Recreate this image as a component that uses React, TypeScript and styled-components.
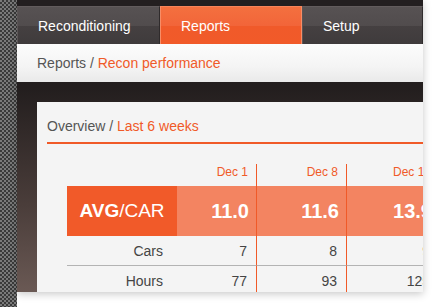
import React from 'react';
import styled, { createGlobalStyle } from 'styled-components';

const GlobalStyle = createGlobalStyle`
  html, body {
    margin: 0;
    padding: 0;
    background: #ffffff;
  }
  body {
    font-family: "Liberation Sans", Arial, sans-serif;
  }
`;

const ORANGE = '#f05a28';

const tabs = [
  { label: 'Reconditioning', width: 143 },
  { label: 'Reports', width: 142, active: true },
  { label: 'Setup', width: 121 },
];

const weeks = [
  { date: 'Dec 1', avg: '11.0', cars: '7', hours: '77', width: 80 },
  { date: 'Dec 8', avg: '11.6', cars: '8', hours: '93', width: 90 },
  { date: 'Dec 15', avg: '13.9', cars: '9', hours: '125', width: 93 },
];

const App = () => {
  const columns = `110px ${weeks.map((w) => `${w.width}px`).join(' ')}`;

  return (
    <>
      <GlobalStyle />
      <Page>
        <Checker />
        <Screen>
          <TopStrip />
          <TabBar>
            {tabs.map((t) => (
              <Tab key={t.label} $active={t.active} style={{ width: t.width }}>
                {t.label}
              </Tab>
            ))}
          </TabBar>
          <Breadcrumb>
            Reports / <Accent>Recon performance</Accent>
          </Breadcrumb>
          <Body>
            <Panel>
              <PanelTitle>
                Overview / <Accent>Last 6 weeks</Accent>
              </PanelTitle>
              <Table style={{ gridTemplateColumns: columns }}>
                <HeadCell />
                {weeks.map((w) => (
                  <DateCell key={w.date}>{w.date}</DateCell>
                ))}

                <AvgLabel>
                  <b>AVG</b>/CAR
                </AvgLabel>
                {weeks.map((w) => (
                  <AvgValue key={w.date}>{w.avg}</AvgValue>
                ))}

                <RowLabel $divider>Cars</RowLabel>
                {weeks.map((w) => (
                  <Value key={w.date} $divider>
                    {w.cars}
                  </Value>
                ))}

                <RowLabel>Hours</RowLabel>
                {weeks.map((w) => (
                  <Value key={w.date}>{w.hours}</Value>
                ))}
              </Table>
            </Panel>
          </Body>
        </Screen>
      </Page>
    </>
  );
};

export default App;

const Page = styled.div`
  display: flex;
  width: 434px;
  height: 307px;
  overflow: hidden;
  background: #ffffff;
`;

const Checker = styled.div`
  width: 17px;
  flex-shrink: 0;
  background-color: #7a7a7a;
  background-image: repeating-conic-gradient(#3a3a3a 0% 25%, #7a7a7a 0% 50%);
  background-size: 4px 4px;
`;

const Screen = styled.div`
  display: flex;
  flex-direction: column;
  width: 406px;
  height: 292px;
  flex-shrink: 0;
  overflow: hidden;
  background: linear-gradient(180deg, #1f1b1c 0%, #231e1e 30%, #4a3d3a 70%, #6a5954 100%);
  box-shadow: 0 2px 8px rgba(0, 0, 0, 0.22);
`;

const TopStrip = styled.div`
  height: 6px;
  flex-shrink: 0;
  background: #231f20;
`;

const TabBar = styled.div`
  display: flex;
  height: 38px;
  flex-shrink: 0;
`;

const Tab = styled.div<{ $active?: boolean }>`
  box-sizing: border-box;
  flex-shrink: 0;
  height: 38px;
  padding: 0 0 0 20px;
  display: flex;
  align-items: center;
  font-size: 14px;
  color: #ffffff;
  border-top: 1px solid ${({ $active }) => ($active ? '#f7845a' : '#625c5d')};
  border-left: 1px solid ${({ $active }) => ($active ? '#f88d66' : '#5c5657')};
  border-right: 1px solid ${({ $active }) => ($active ? '#f88d66' : '#2f2b2c')};
  background: ${({ $active }) =>
    $active
      ? 'linear-gradient(180deg, #f4703f 0%, #f26539 50%, #f05a2a 51%, #f15a29 100%)'
      : 'linear-gradient(180deg, #575253 0%, #514c4d 50%, #454041 51%, #3f3b3c 100%)'};
`;

const Breadcrumb = styled.div`
  height: 38px;
  flex-shrink: 0;
  padding-left: 20px;
  display: flex;
  align-items: center;
  font-size: 14px;
  color: #555555;
  white-space: pre;
  background: linear-gradient(180deg, #fcfcfc 0%, #f4f4f4 60%, #e9e9e9 100%);
`;

const Accent = styled.span`
  color: ${ORANGE};
`;

const Body = styled.div`
  flex: 1;
  min-height: 0;
  overflow: hidden;
  padding: 20px 0 0 20px;
  display: flex;
`;

const Panel = styled.div`
  flex: 1;
  background: #f4f4f4;
  padding-left: 10px;
`;

const PanelTitle = styled.div`
  box-sizing: border-box;
  height: 42px;
  padding-top: 16px;
  font-size: 14px;
  color: #555555;
  white-space: pre;
  border-bottom: 2px solid ${ORANGE};
`;

const Table = styled.div`
  display: grid;
  margin: 20px 0 0 20px;
  grid-template-rows: 22px 50px 30px 30px;
`;

const HeadCell = styled.div``;

const DataCell = styled.div`
  box-sizing: border-box;
  display: flex;
  align-items: center;
  justify-content: flex-end;
  padding-right: 8px;
  border-right: 1px solid ${ORANGE};
  white-space: nowrap;
`;

const DateCell = styled(DataCell)`
  font-size: 12px;
  color: ${ORANGE};
  padding-bottom: 6px;
`;

const AvgLabel = styled.div`
  display: flex;
  align-items: center;
  justify-content: center;
  background: #f15a29;
  color: #ffffff;
  font-size: 19px;
`;

const AvgValue = styled(DataCell)`
  background: #f38461;
  color: #ffffff;
  font-size: 20px;
  font-weight: bold;
  padding-right: 7px;
`;

const RowLabel = styled.div<{ $divider?: boolean }>`
  display: flex;
  align-items: center;
  justify-content: flex-end;
  padding-right: 14px;
  font-size: 14px;
  color: #444444;
  border-bottom: ${({ $divider }) => ($divider ? '1px solid #b3b3b3' : 'none')};
`;

const Value = styled(DataCell)<{ $divider?: boolean }>`
  font-size: 14px;
  color: #444444;
  padding-right: 9px;
  border-bottom: ${({ $divider }) => ($divider ? '1px solid #b3b3b3' : 'none')};
`;
